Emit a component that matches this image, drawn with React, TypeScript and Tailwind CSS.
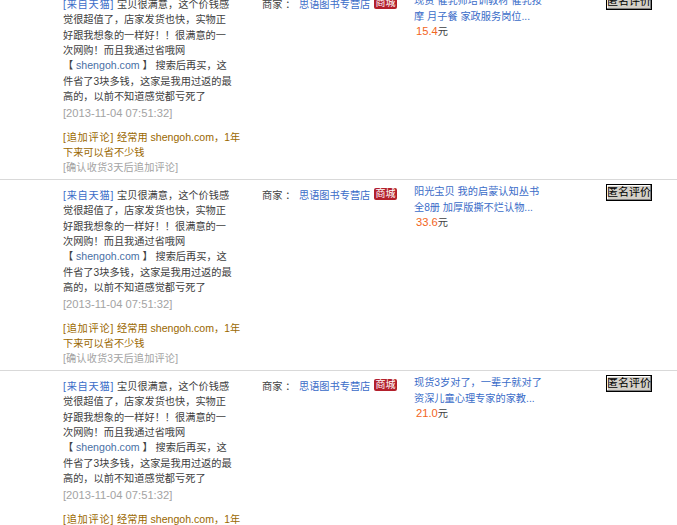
const rows = [
  {
    title: ['现货 催乳师培训教材 催乳按', '摩 月子餐 家政服务岗位...'],
    price: '15.4',
  },
  {
    title: ['阳光宝贝 我的启蒙认知丛书', '全8册 加厚版撕不烂认物...'],
    price: '33.6',
  },
  {
    title: ['现货3岁对了，一辈子就对了', '资深儿童心理专家的家教...'],
    price: '21.0',
  },
];

function ReviewRow({ title, price }: { title: string[]; price: string }) {
  return (
    <div className="flex h-[191px] shrink-0 border-b border-[#d9d9d9] pl-[63px]">
      <div className="w-[178px] whitespace-nowrap pt-[8px] text-[10.2px] leading-[15.35px] text-[#404040]">
        <div>
          <span className="tracking-[0.8px] text-[#3a6cc8]">[来自天猫]</span> 宝贝很满意，这个价钱感
        </div>
        <div>觉很超值了，店家发货也快，实物正</div>
        <div>好跟我想象的一样好！！很满意的一</div>
        <div>次网购！而且我通过省哦网</div>
        <div>
          【 <span className="text-[10.6px] text-[#4a6fa5]">shengoh.com</span> 】 搜索后再买，这
        </div>
        <div>件省了3块多钱，这家是我用过返的最</div>
        <div>高的，以前不知道感觉都亏死了</div>
        <div className="mt-[2px] text-[11.2px] text-[#a3a3a3]">[2013-11-04 07:51:32]</div>
        <div className="mt-[8px] text-[#9a6700]">
          <span className="tracking-[0.8px]">[追加评论]</span> 经常用{' '}
          <span className="text-[10.6px]">shengoh.com</span>，1年
        </div>
        <div className="text-[#9a6700]">下来可以省不少钱</div>
        <div className="tracking-[0.15px] text-[#a3a3a3]">[确认收货3天后追加评论]</div>
      </div>
      <div className="ml-[21px] flex h-fit w-[152px] items-start pt-[7px] text-[10.2px] leading-[18px]">
        <span className="w-[37px] text-[#404040]">商家 ：</span>
        <span className="w-[75px] text-[#3a6cc8]">思语图书专营店</span>
        <span className="mt-[1px] h-[12px] w-[23px] rounded-[2px] bg-[#b3202c] text-center text-[10px] leading-[12px] text-white">
          商城
        </span>
      </div>
      <div className="w-[192px] whitespace-nowrap pt-[4px] text-[10.2px] leading-[15.5px]">
        {title.map((line) => (
          <div key={line} className="text-[#3a6cc8]">
            {line}
          </div>
        ))}
        <div className="pl-[2px] text-[#404040]">
          <span className="text-[11.2px] text-[#f26522]">{price}</span>元
        </div>
      </div>
      <div className="pt-[4px]">
        <button className="block h-[17px] w-[46px] border border-black bg-[#d4d0c8] p-0 text-[11px] leading-[15px] text-black shadow-[inset_-1px_-1px_0_#808080,inset_1px_1px_0_#fff]">
          匿名评价
        </button>
      </div>
    </div>
  );
}

export default function App() {
  return (
    <div className="h-[525px] overflow-hidden bg-white font-['Liberation_Sans','Noto_Sans_CJK_SC',sans-serif]">
      <div className="-mt-[11px] flex flex-col">
        {rows.map((row) => (
          <ReviewRow key={row.price} title={row.title} price={row.price} />
        ))}
      </div>
    </div>
  );
}
